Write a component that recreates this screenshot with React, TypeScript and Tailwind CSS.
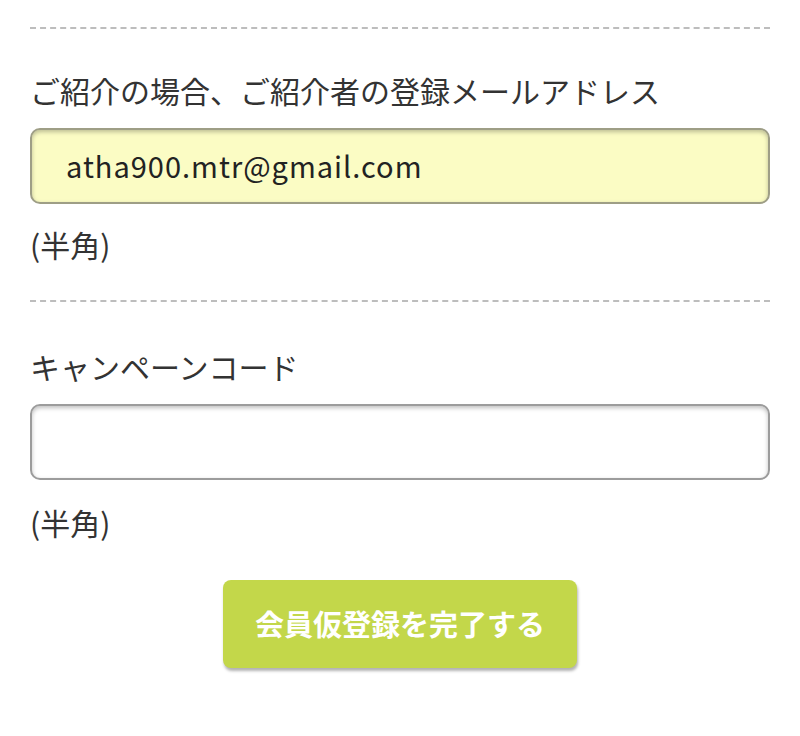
export default function App() {
  const font = { fontFamily: '"Noto Sans CJK JP", "Noto Sans", sans-serif' };
  return (
    <div className="w-[800px] h-[736px] bg-white px-[30px] pt-[27px] text-[#333]" style={font}>
      <div className="border-t-2 border-dashed border-[#bdbdbd]" />
      <div className="mt-[41px] text-[30px] leading-[40px]">ご紹介の場合、ご紹介者の登録メールアドレス</div>
      <div className="mt-[18px] h-[76px] rounded-[10px] border-2 border-[#9e9e86] bg-[#fbfcc4] shadow-[inset_0_2px_4px_rgba(0,0,0,0.25)] flex items-center pl-[34px] text-[29px] tracking-[1px] text-[#222]">
        atha900.mtr@gmail.com
      </div>
      <div className="mt-[20px] text-[30px] leading-[40px]">(半角)</div>
      <div className="mt-[36px] border-t-2 border-dashed border-[#bdbdbd]" />
      <div className="mt-[44px] text-[30px] leading-[40px]">キャンペーンコード</div>
      <div className="mt-[18px] h-[76px] rounded-[10px] border-2 border-[#9c9c9c] bg-white shadow-[inset_0_2px_4px_rgba(0,0,0,0.25)]" />
      <div className="mt-[22px] text-[30px] leading-[40px]">(半角)</div>
      <div className="mt-[38px] flex justify-center">
        <button className="w-[354px] h-[88px] rounded-[8px] bg-[#c3d74a] text-white text-[29px] font-bold shadow-[1px_3px_3px_rgba(0,0,0,0.3)]">
          会員仮登録を完了する
        </button>
      </div>
    </div>
  );
}
